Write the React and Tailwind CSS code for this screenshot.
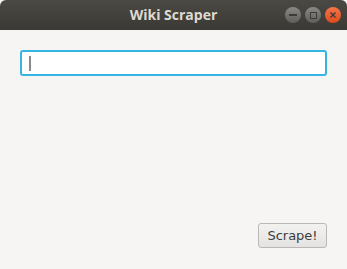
export default function App() {
  return (
    <div className="w-[347px] h-[269px] flex flex-col bg-[#f6f5f4] font-['Open_Sans',sans-serif]">
      <div className="h-[30px] shrink-0 rounded-t-[6px] bg-gradient-to-b from-[#4a4944] to-[#3a3935] relative flex items-center justify-center">
        <span className="text-[14px] font-bold text-[#dfdbd2] leading-none">Wiki Scraper</span>
        <div className="absolute right-[6px] top-[7px] flex gap-[4px]">
          <span className="w-[16px] h-[16px] rounded-full bg-gradient-to-b from-[#8a8985] to-[#5f5e5a] flex items-center justify-center">
            <span className="w-[8px] h-[1.5px] bg-[#3c3b37]" />
          </span>
          <span className="w-[16px] h-[16px] rounded-full bg-gradient-to-b from-[#8a8985] to-[#5f5e5a] flex items-center justify-center">
            <span className="w-[7px] h-[7px] border border-[#3c3b37]" />
          </span>
          <span className="w-[16px] h-[16px] rounded-full bg-gradient-to-b from-[#f4764a] to-[#df4a16] flex items-center justify-center">
            <svg width="8" height="8" viewBox="0 0 8 8">
              <path d="M1.5 1.5 L6.5 6.5 M6.5 1.5 L1.5 6.5" stroke="#3c3b37" strokeWidth="1.4" />
            </svg>
          </span>
        </div>
      </div>
      <div className="flex-1 flex flex-col px-[20px] pt-[20px] pb-[21px]">
        <div className="h-[26px] rounded-[3px] border-[2px] border-[#35b5e4] bg-white flex items-center pl-[7px]">
          <span className="w-[2px] h-[15px] bg-[#8a8a8a]" />
        </div>
        <div className="flex-1" />
        <div className="flex justify-end">
          <button className="w-[69px] h-[25px] rounded-[3px] border border-[#b9b8b5] bg-gradient-to-b from-[#f2f2f1] to-[#e4e3e1] font-['DejaVu_Sans',sans-serif] text-[13px] text-[#3c3c3c] leading-none">
            Scrape!
          </button>
        </div>
      </div>
    </div>
  );
}
